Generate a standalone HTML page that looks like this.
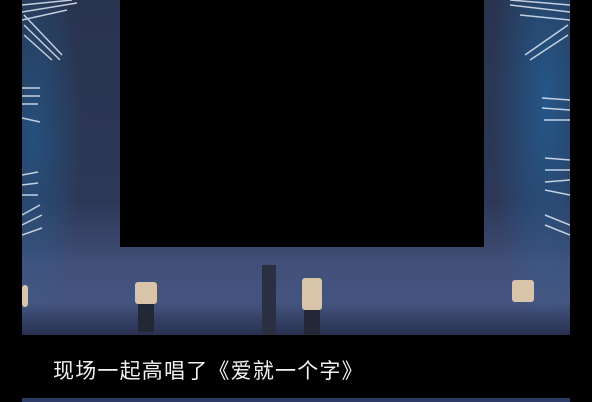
<!DOCTYPE html>
<html><head><meta charset="utf-8"><style>
html,body{margin:0;padding:0;background:#000;width:592px;height:402px;overflow:hidden;position:relative}
.img{position:absolute;left:22px;top:0;width:548px;height:335px;background:linear-gradient(180deg,#29344f 0%,#2d3858 60%,#3f4d74 78%,#3a4870 92%,#282f4a 100%)}
.glowl{position:absolute;left:0;top:0;width:60px;height:335px;background:radial-gradient(ellipse at 20% 40%,rgba(30,110,170,.45),transparent 70%)}
.glowr{position:absolute;right:0;top:0;width:80px;height:335px;background:radial-gradient(ellipse at 70% 30%,rgba(30,120,190,.5),transparent 70%)}
.screen{position:absolute;left:120px;top:0;width:364px;height:247px;background:#000}
.stage{position:absolute;left:22px;top:250px;width:548px;height:85px;background:linear-gradient(180deg,rgba(60,80,130,.1),rgba(100,120,170,.25) 60%,rgba(40,50,85,.55))}
.p{position:absolute;background:#d8c4a8;border-radius:3px}
.leg{position:absolute;background:#222836}
.cap{position:absolute;left:53px;top:355px;color:#f2f2f2;font:21px "Liberation Sans","Noto Sans CJK SC",sans-serif;letter-spacing:1.2px;white-space:nowrap}
.bot{position:absolute;left:22px;top:398px;width:548px;height:4px;background:#2c3a66}
</style></head><body>
<div class="img"><div class="glowl"></div><div class="glowr"></div>
<svg width="548" height="335" style="position:absolute;left:0;top:0" stroke="#dfe8f5" stroke-width="1.5" opacity=".85">
<g><line x1="0" y1="5" x2="50" y2="0"/><line x1="0" y1="12" x2="55" y2="3"/><line x1="0" y1="20" x2="45" y2="10"/><line x1="2" y1="15" x2="40" y2="55"/><line x1="2" y1="25" x2="38" y2="60"/><line x1="2" y1="35" x2="30" y2="60"/>
<line x1="0" y1="88" x2="18" y2="88"/><line x1="0" y1="96" x2="18" y2="96"/><line x1="0" y1="104" x2="16" y2="104"/><line x1="0" y1="118" x2="18" y2="122"/>
<line x1="0" y1="175" x2="16" y2="172"/><line x1="0" y1="185" x2="16" y2="183"/><line x1="0" y1="195" x2="16" y2="195"/><line x1="0" y1="215" x2="18" y2="205"/><line x1="0" y1="225" x2="20" y2="215"/><line x1="0" y1="235" x2="20" y2="228"/></g>
<g transform="translate(548,0) scale(-1,1)"><line x1="0" y1="5" x2="60" y2="0"/><line x1="0" y1="12" x2="60" y2="5"/><line x1="0" y1="20" x2="50" y2="15"/><line x1="2" y1="25" x2="45" y2="55"/><line x1="2" y1="35" x2="40" y2="60"/>
<line x1="0" y1="100" x2="28" y2="98"/><line x1="0" y1="110" x2="28" y2="108"/><line x1="0" y1="120" x2="26" y2="120"/>
<line x1="0" y1="160" x2="25" y2="158"/><line x1="0" y1="170" x2="25" y2="170"/><line x1="0" y1="180" x2="25" y2="182"/><line x1="0" y1="195" x2="25" y2="190"/><line x1="0" y1="225" x2="25" y2="215"/><line x1="0" y1="235" x2="25" y2="225"/></g>
</svg></div>
<div class="stage"></div>
<div class="screen"></div>
<div class="p" style="left:135px;top:282px;width:22px;height:22px"></div><div class="leg" style="left:138px;top:304px;width:16px;height:28px"></div>
<div class="p" style="left:302px;top:278px;width:20px;height:32px"></div><div class="leg" style="left:304px;top:310px;width:16px;height:25px"></div>
<div class="leg" style="left:262px;top:265px;width:14px;height:70px;background:#2a2f42"></div>
<div class="p" style="left:512px;top:280px;width:22px;height:22px"></div>
<div class="p" style="left:22px;top:285px;width:6px;height:22px"></div>
<div class="cap">现场一起高唱了《爱就一个字》</div>
<div class="bot"></div>
</body></html>
